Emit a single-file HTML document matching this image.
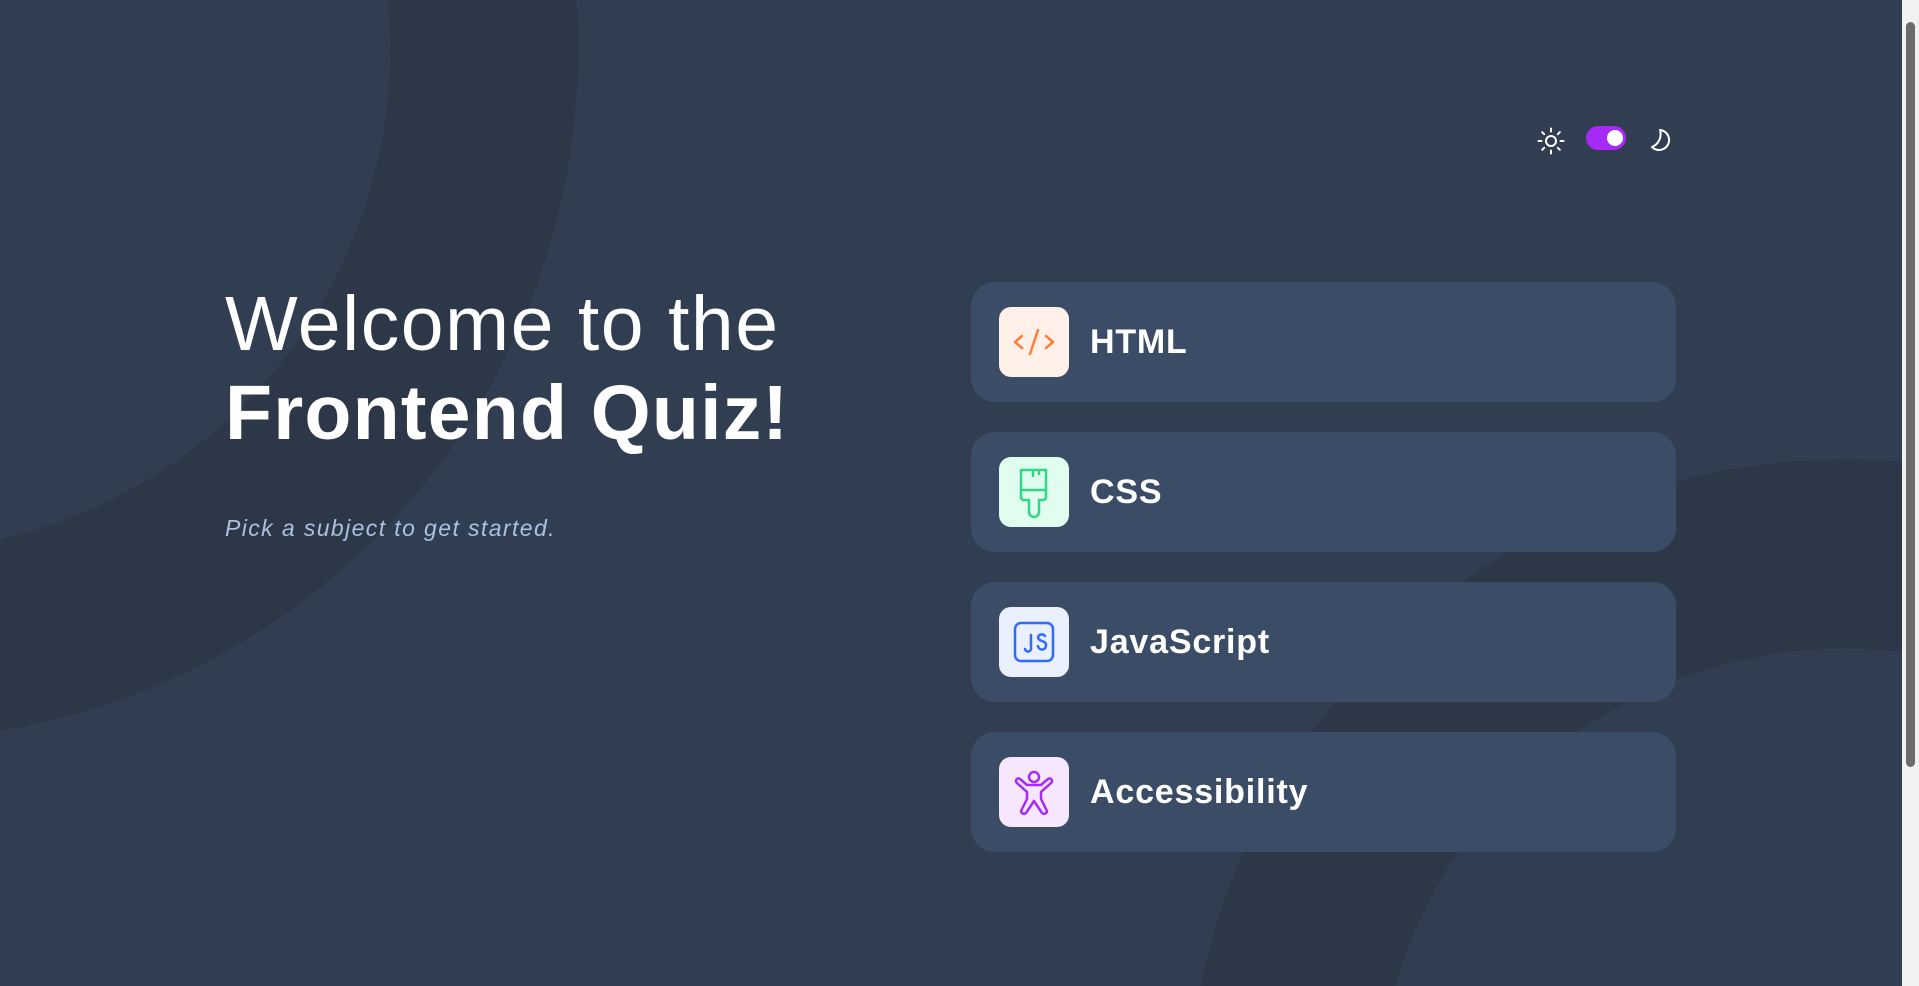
<!DOCTYPE html>
<html><head><meta charset="utf-8"><style>
html,body{margin:0;padding:0;width:1919px;height:986px;overflow:hidden;background:#313e51;font-family:"Liberation Sans",sans-serif;}
.bg{position:absolute;left:0;top:0;width:1902px;height:986px;overflow:hidden}
.sb{position:absolute;left:1902px;top:0;width:17px;height:986px;background:#f1f1f1}
.sb .th{position:absolute;left:4px;top:22px;width:9px;height:745px;background:#6b6b6b;border-radius:5px}
.card{position:absolute;left:971px;width:705px;height:120px;background:#3b4d66;border-radius:24px}
.ic{position:absolute;left:28px;top:25px;width:70px;height:70px;border-radius:12px}
.ic svg{position:absolute;left:0;top:0}
.lb{position:absolute;left:119px;top:0;line-height:120px;font-size:34px;font-weight:bold;color:#fff;letter-spacing:0.8px}
</style></head><body>
<div class="bg">
<svg width="1902" height="986" style="position:absolute;left:0;top:0">
<circle cx="-112" cy="50" r="596" fill="none" stroke="#2c3847" stroke-width="188"/>
<circle cx="1845" cy="1117" r="563" fill="none" stroke="#2c3847" stroke-width="189"/>
</svg>
</div>
<div style="position:absolute;left:225px;top:280px;color:#fff;font-size:77px;line-height:89px;">
<div style="font-weight:300;letter-spacing:1.5px">Welcome to the</div>
<div style="font-weight:bold;letter-spacing:1.2px">Frontend Quiz!</div>
</div>
<div style="position:absolute;left:225px;top:515px;color:#abc1e1;font-size:23px;font-style:italic;letter-spacing:1.4px">Pick a subject to get started.</div>

<svg style="position:absolute;left:1537px;top:127px" width="28" height="28" viewBox="0 0 28 28" fill="none" stroke="#fff" stroke-width="2" stroke-linecap="round">
<circle cx="14" cy="14" r="5"/>
<path d="M14 1.5v3M14 23.5v3M1.5 14h3M23.5 14h3M5.2 5.2l2 2M20.8 20.8l2 2M5.2 22.8l2-2M20.8 7.2l2-2"/>
</svg>
<div style="position:absolute;left:1586px;top:126px;width:40px;height:24px;border-radius:12px;background:#a729f5"><div style="position:absolute;left:21px;top:4px;width:16px;height:16px;border-radius:50%;background:#fff"></div></div>
<svg style="position:absolute;left:1647px;top:126px" width="28" height="28" viewBox="0 0 28 28" fill="none" stroke="#fff" stroke-width="2" stroke-linejoin="round">
<path d="M13 4 A10 10 0 1 1 5 21 A14 14 0 0 0 13 4Z"/>
</svg>

<div class="card" style="top:282px"><div class="ic" style="background:#fff1e9">
<svg width="70" height="70" viewBox="0 0 70 70" fill="none" stroke="#ff7e35" stroke-width="2.5" stroke-linecap="round" stroke-linejoin="round"><path d="M23 29l-7 6 7 6M47 29l7 6-7 6M39 23l-8 24"/></svg>
</div><div class="lb">HTML</div></div>

<div class="card" style="top:432px"><div class="ic" style="background:#e0fdef">
<svg width="70" height="70" viewBox="0 0 70 70" fill="none" stroke="#2fd887" stroke-width="2.5" stroke-linejoin="round"><path d="M22 13h25v27a3 3 0 0 1-3 3h-4v12a5 5 0 0 1-10 0V43h-4a3 3 0 0 1-4-3z"/><path d="M22 33h25M34 13v7M40 13v5"/></svg>
</div><div class="lb">CSS</div></div>

<div class="card" style="top:582px"><div class="ic" style="background:#ebf0ff">
<svg width="70" height="70" viewBox="0 0 70 70" fill="none" stroke="#306aff" stroke-width="2.5" stroke-linecap="round" stroke-linejoin="round"><rect x="16" y="16" width="38" height="38" rx="6"/><path d="M32 28v13a3 3 0 0 1-6 1M46 29a4 4 0 0 0-7 1c0 5 8 3 8 8a4 4 0 0 1-8 1"/></svg>
</div><div class="lb">JavaScript</div></div>

<div class="card" style="top:732px"><div class="ic" style="background:#f6e7ff">
<svg width="70" height="70" viewBox="0 0 70 70" fill="none" stroke="#a729f5" stroke-width="2.5" stroke-linecap="round" stroke-linejoin="round"><circle cx="35" cy="20" r="5"/><path d="M28 28l-7-6a2.5 2.5 0 0 0-3 4l10 9v7l-6 12a3 3 0 0 0 5 2l8-12 8 12a3 3 0 0 0 5-2l-6-12v-7l10-9a2.5 2.5 0 0 0-3-4l-7 6z"/></svg>
</div><div class="lb">Accessibility</div></div>

<div class="sb"><div class="th"></div></div>
</body></html>
